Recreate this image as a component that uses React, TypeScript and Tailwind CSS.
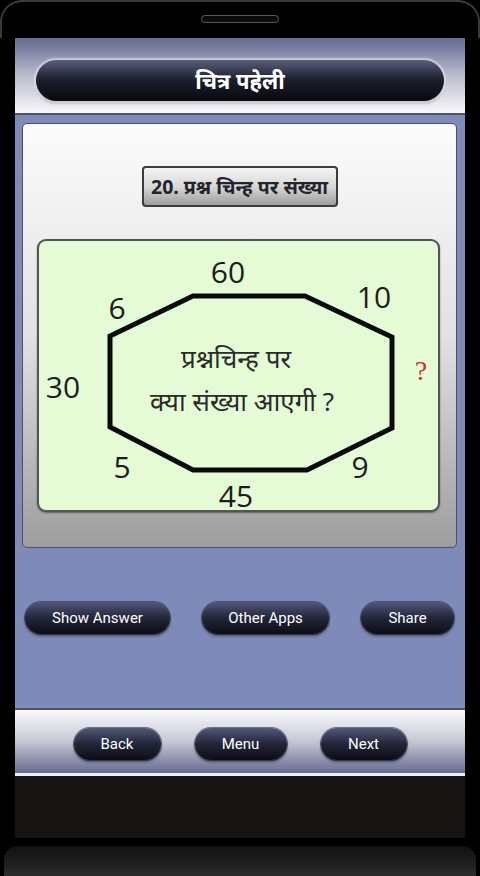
const hindi = "font-['Noto_Sans','Noto_Sans_Devanagari',sans-serif]";

const PillButton = ({ label, width }: { label: string; width: string }) => {
  return (
    <button
      className={`${width} h-[32px] rounded-full bg-gradient-to-b from-[#525878] via-[#23263a] to-[#0c0d14] text-white text-[15px] font-['Roboto',sans-serif] shadow-[0_2px_3px_rgba(0,0,0,0.45),0_0_0_1px_rgba(40,44,70,0.6)]`}
    >
      {label}
    </button>
  );
};

const Puzzle = () => {
  const nums: [string, number, number][] = [
    ["60", 189, 30],
    ["6", 78, 66],
    ["10", 335, 55],
    ["30", 24, 145],
    ["5", 83, 225],
    ["45", 197, 254],
    ["9", 321, 225],
  ];
  return (
    <svg viewBox="0 0 399 269" className="w-full h-full overflow-visible">
      <polygon
        points="154,55 266,55 353,96 353,187 268,229 154,229 71,186 71,95"
        fill="none"
        stroke="#0a0a0a"
        strokeWidth="5"
      />
      {nums.map(([t, x, y]) => (
        <text
          key={t}
          x={x}
          y={y}
          textAnchor="middle"
          dominantBaseline="central"
          fontSize="30"
          fill="#1c1c1c"
          fontFamily="'Open Sans', sans-serif"
        >
          {t}
        </text>
      ))}
      <text
        x={382}
        y={129}
        textAnchor="middle"
        dominantBaseline="central"
        fontSize="28"
        fill="#c0392b"
        fontFamily="'Liberation Serif', serif"
      >
        ?
      </text>
      <text
        x={197}
        y={117}
        textAnchor="middle"
        dominantBaseline="central"
        fontSize="26"
        fill="#2a2a2a"
        fontFamily="'Noto Sans', 'Noto Serif Devanagari', serif"
      >
        प्रश्नचिन्ह पर
      </text>
      <text
        x={203}
        y={160}
        textAnchor="middle"
        dominantBaseline="central"
        fontSize="26"
        fill="#2a2a2a"
        fontFamily="'Noto Sans', 'Noto Serif Devanagari', serif"
      >
        क्या संख्या आएगी ?
      </text>
    </svg>
  );
};

const App = () => {
  return (
    <div className="w-[480px] h-[876px] bg-black flex flex-col overflow-hidden">
      {/* top bezel */}
      <div className="h-[38px] shrink-0 rounded-t-[22px] border-t-2 border-x-2 border-[#3a3a3a] flex justify-center pt-[13px]">
        <div className="w-[78px] h-[8px] rounded-full border border-[#5a5a5a] bg-[#0a0a0a]" />
      </div>

      {/* screen */}
      <div className="mx-[15px] h-[800px] shrink-0 flex flex-col">
        {/* header */}
        <div className="h-[77px] shrink-0 bg-gradient-to-b from-[#656a90] via-[#b9bccd] to-[#f8f8fa] border-b-2 border-[#4d5370] pt-[22px] px-[21px]">
          <div className="h-[41px] rounded-full bg-gradient-to-b from-[#5a5f7e] via-[#1c1e2c] to-[#08090e] shadow-[0_0_2px_2px_rgba(255,255,255,0.55),0_2px_3px_rgba(0,0,0,0.4)] flex items-center justify-center">
            <span className={`${hindi} text-white text-[22px] font-bold`}>चित्र पहेली</span>
          </div>
        </div>

        {/* content */}
        <div className="h-[593px] shrink-0 bg-[#7e8ab8] flex flex-col">
          <div className="mt-[8px] ml-[7px] mr-[8px] h-[425px] rounded-[5px] border border-[#4a5068] bg-gradient-to-b from-[#fbfbfb] via-[#e2e2e2] to-[#9d9d9d] flex flex-col items-center">
            <div className="mt-[42px] w-[196px] h-[41px] rounded-[4px] border-2 border-[#3c3c3c] bg-gradient-to-b from-[#f4f4f4] via-[#d8d8d8] to-[#9e9e9e] flex items-center justify-center">
              <span className={`${hindi} text-[#23232b] text-[19.5px] font-bold whitespace-nowrap`}>
                20. प्रश्न चिन्ह पर संख्या
              </span>
            </div>
            <div className="mt-[32px] self-start ml-[14px] w-[403px] h-[273px] rounded-[9px] border-2 border-[#555] bg-[#e5fbd5] shadow-[0_1px_2px_rgba(0,0,0,0.4)]">
              <Puzzle />
            </div>
          </div>

          <div className="mt-[54px] pl-[10px] pr-[11px] flex justify-between">
            <PillButton label="Show Answer" width="w-[145px]" />
            <PillButton label="Other Apps" width="w-[127px]" />
            <PillButton label="Share" width="w-[93px]" />
          </div>
        </div>

        {/* bottom bar */}
        <div className="h-[68px] shrink-0 border-t-2 border-[#4d5370] bg-gradient-to-b from-[#fafafc] via-[#c6c8d4] to-[#676c90] border-b-[3px] border-b-[#eeeef2] pt-[18px] flex justify-center gap-[34px]">
          <PillButton label="Back" width="w-[87px]" />
          <PillButton label="Menu" width="w-[92px]" />
          <PillButton label="Next" width="w-[86px]" />
        </div>

        <div className="flex-1 bg-[#171513]" />
      </div>

      {/* bottom bezel */}
      <div className="mt-[8px] mx-[4px] flex-1 rounded-t-[14px] bg-gradient-to-b from-[#111] to-[#2c2c2c]" />
    </div>
  );
};

export default App;
